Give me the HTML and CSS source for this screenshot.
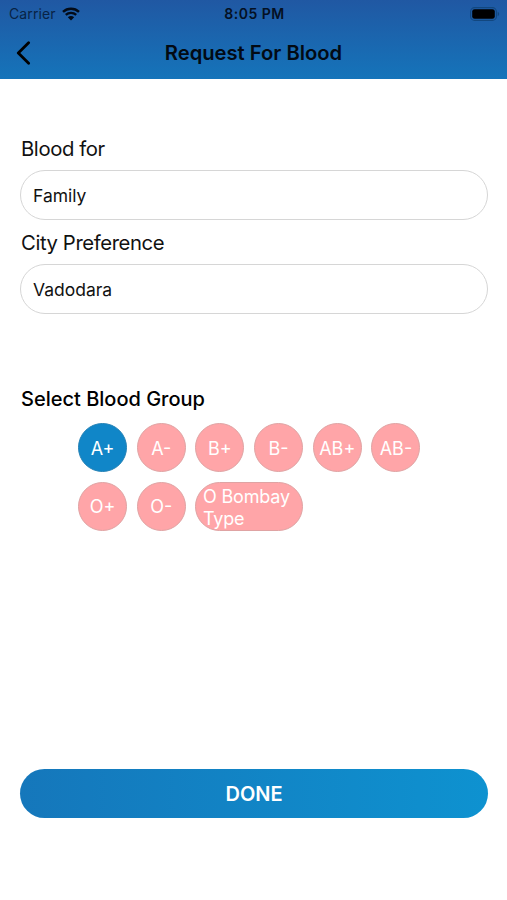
FILE: index.html
```html
<!DOCTYPE html>
<html lang="en">
<head>
  <meta charset="UTF-8" />
  <meta name="viewport" content="width=device-width, initial-scale=1.0"/>
  <title>Request For Blood</title>
  <link rel="stylesheet" href="styles.css">
</head>
<body>
  <header class="header">
    <div class="status-bar">
      <div class="carrier">
        <span class="carrier-name">Carrier</span>
        <svg class="wifi" width="18" height="14" viewBox="0 0 18 14">
          <path d="M1 4.9C5.5.7 12.5.7 17 4.9M3.8 7.9c3-2.7 7.4-2.7 10.4 0" fill="none" stroke="#030b18" stroke-width="2.4"/>
          <path d="M9 13.6l-3.2-3.3c1.8-1.6 4.6-1.6 6.4 0z" fill="#030b18"/>
        </svg>
      </div>
      <span class="time">8:05 PM</span>
      <svg class="battery" width="30" height="14" viewBox="0 0 30 14">
        <rect x=".6" y=".6" width="25.8" height="12.8" rx="4" fill="none" stroke="#12477f" stroke-width="1.1"/>
        <rect x="2.2" y="2.2" width="22.6" height="9.6" rx="2.4" fill="#000"/>
        <path d="M27.7 4.8c1.9.7 1.9 3.7 0 4.4z" fill="#12477f"/>
      </svg>
    </div>
    <div class="nav-bar">
      <button class="back" aria-label="Back">
        <svg width="15" height="24" viewBox="0 0 15 24">
          <path d="M12.6 1.8L2.3 12l10.3 10.2" fill="none" stroke="#000" stroke-width="2.8" stroke-linecap="round" stroke-linejoin="round"/>
        </svg>
      </button>
      <h1 class="title">Request For Blood</h1>
    </div>
  </header>

  <main class="content">
    <label class="label label-blood" for="bloodFor">Blood for</label>
    <input class="field" type="text" id="bloodFor" value="Family" />
    <label class="label label-city" for="city">City Preference</label>
    <input class="field" type="text" id="city" value="Vadodara" />

    <h2 class="group-title">Select Blood Group</h2>
    <div class="groups">
      <button class="group selected">A+</button>
      <button class="group">A-</button>
      <button class="group">B+</button>
      <button class="group">B-</button>
      <button class="group">AB+</button>
      <button class="group">AB-</button>
      <button class="group">O+</button>
      <button class="group">O-</button>
      <button class="group wide">O Bombay Type</button>
    </div>

    <button class="done">DONE</button>
  </main>

  <script>
    const groups = document.querySelectorAll(".group");

    groups.forEach(group => {
      group.addEventListener("click", () => {
        groups.forEach(g => g.classList.remove("selected"));
        group.classList.add("selected");
      });
    });
  </script>
</body>
</html>
```
FILE: styles.css
```css
* {
  box-sizing: border-box;
}

body {
  margin: 0;
  height: 900px;
  background: #fff;
  color: #111;
  font-family: Inter, "Liberation Sans", sans-serif;
  overflow: hidden;
}

button {
  padding: 0;
  border: none;
  background: none;
  font-family: inherit;
  cursor: pointer;
}

.header {
  height: 79px;
  background: linear-gradient(to bottom, #2058a3, #1574ba);
}

.status-bar {
  display: grid;
  grid-template-columns: 1fr auto 1fr;
  align-items: center;
  height: 27px;
  padding: 0 7px 0 9px;
}

.carrier {
  display: flex;
  align-items: center;
  gap: 6px;
}

.carrier-name {
  color: #082345;
  font-size: 14px;
  letter-spacing: 0.1px;
}

.time {
  color: #041023;
  font-size: 14px;
  font-weight: 600;
  letter-spacing: 0.5px;
}

.battery {
  justify-self: end;
}

.nav-bar {
  display: grid;
  grid-template-columns: 40px 1fr 40px;
  align-items: center;
  height: 51px;
}

.back {
  display: flex;
  padding-left: 16px;
}

.title {
  margin: 0;
  color: #020a14;
  font-size: 20.2px;
  font-weight: 600;
  text-align: center;
}

.content {
  display: flex;
  flex-direction: column;
  padding: 0 20px;
}

.label {
  height: 26px;
  padding-left: 1px;
  font-size: 20.3px;
  line-height: 26px;
  letter-spacing: -0.4px;
}

.label-blood {
  margin: 57px 0 8px;
}

.label-city {
  margin: 10px 0 8px;
}

.field {
  width: 468px;
  height: 50px;
  padding: 0 12px;
  border: 1.5px solid #d6d6d6;
  border-radius: 25px;
  background: #fff;
  color: #111;
  font-family: inherit;
  font-size: 17.5px;
  outline: none;
}

.group-title {
  height: 26px;
  margin: 72px 0 11px;
  padding-left: 1px;
  color: #000;
  font-size: 20px;
  font-weight: 500;
  line-height: 26px;
}

.groups {
  display: flex;
  flex-wrap: wrap;
  gap: 9.7px;
  width: 352px;
  margin-left: 58px;
}

.group {
  width: 49px;
  height: 49px;
  padding-top: 2px;
  border: 1px solid #dfa3a3;
  border-radius: 25px;
  background: #ffa5a8;
  color: #fff;
  font-size: 18px;
  line-height: 22px;
}

.group.wide {
  width: 108px;
  padding: 3px 7px 0 6.5px;
  letter-spacing: -0.15px;
  text-align: left;
}

.group.selected {
  border-color: #2481b5;
  background: #1086c8;
}

.done {
  width: 468px;
  height: 49px;
  margin-top: 238px;
  padding-top: 2px;
  border-radius: 25px;
  background: linear-gradient(to right, #1577bb, #0e92d0);
  color: #fff;
  font-size: 20px;
  font-weight: 600;
}
```
